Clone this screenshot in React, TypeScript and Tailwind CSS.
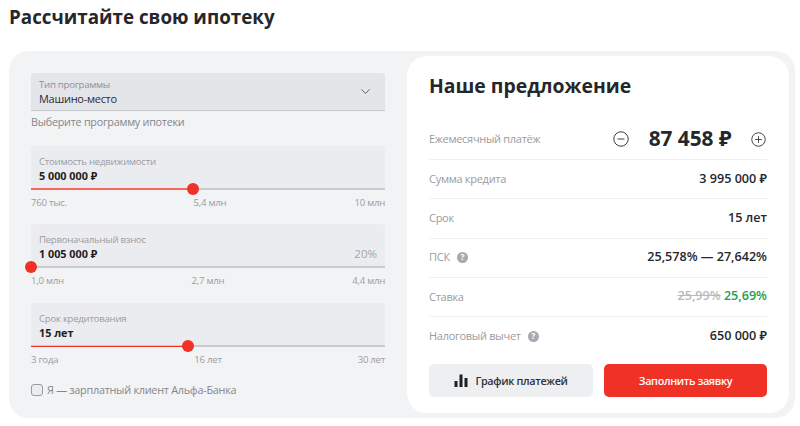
import React from 'react'
import { ChevronDown } from 'lucide-react'

const FONT = "font-['Open_Sans','Noto_Sans',sans-serif]"

function Slider({ label, value, extra, thumb, fillClass, midClass, ticks }: {
  label: string
  value: string
  extra?: string
  thumb: number
  fillClass?: string
  midClass?: string
  ticks: [string, string, string]
}) {
  return (
    <div>
      <div className="relative h-[44px] rounded-t-[3px] bg-[#ebecef] px-2 pt-[9px]">
        <div className="text-[9.6px] leading-[13px] tracking-[-0.25px] text-[#9b9ca3]">{label}</div>
        <div className="flex items-center justify-between text-[10.8px] font-bold leading-[15px] text-[#1f2024]">
          <span>{value}</span>
          {extra && <span className="text-[11.5px] font-normal text-[#a3a4aa]">{extra}</span>}
        </div>
        <div className="absolute inset-x-0 bottom-0 h-[2px] bg-[#c9cad0]" />
        {fillClass && <div className={`absolute bottom-0 left-0 ${fillClass}`} style={{ width: thumb }} />}
        <div className="absolute bottom-[-5px] h-[12px] w-[12px] -translate-x-1/2 rounded-full bg-[#f03226]" style={{ left: thumb }} />
      </div>
      <div className="mt-[6px] grid grid-cols-3 text-[9.6px] leading-[13px] tracking-[-0.25px] text-[#9b9ca3]">
        <span>{ticks[0]}</span>
        <span className={`text-center ${midClass ?? ''}`}>{ticks[1]}</span>
        <span className="text-right">{ticks[2]}</span>
      </div>
    </div>
  )
}

function Row({ label, hint, children }: { label: string; hint?: boolean; children: React.ReactNode }) {
  return (
    <div className="flex h-[39.25px] items-center justify-between border-b border-[#eeeff1] last:border-b-0">
      <div className="flex items-center gap-[7px] text-[11px] tracking-[-0.28px] text-[#9a9ba1]">
        {label}
        {hint && (
          <span className="flex h-[11px] w-[11px] items-center justify-center rounded-full bg-[#a9aab0] text-[8.5px] font-bold leading-none text-white">?</span>
        )}
      </div>
      <div className="text-[12.6px] font-semibold text-[#26272b]">{children}</div>
    </div>
  )
}

function RoundIcon({ plus, size }: { plus?: boolean; size: number }) {
  return (
    <svg width={size} height={size} viewBox="0 0 16 16" fill="none" stroke="#3a3b40" strokeWidth="1">
      <circle cx="8" cy="8" r="7.2" />
      <path d="M4.5 8h7" />
      {plus && <path d="M8 4.5v7" />}
    </svg>
  )
}

export default function App() {
  return (
    <div className={`h-[426px] w-[800px] overflow-hidden bg-white ${FONT}`}>
      <h1 className="pl-[9px] pt-[4px] text-[18.8px] font-bold leading-[27px] text-[#26272b]">Рассчитайте свою ипотеку</h1>

      <div className="ml-[9px] mt-[20px] flex h-[367px] w-[786px] gap-[22px] rounded-[20px] bg-[#f2f3f5] py-[5px] pl-[22px] pr-[6px]">
        <div className="w-[354px] pt-[17px]">
          <div className="relative h-[38px] rounded-t-[3px] border-b border-[#c6c7cd] bg-[#e4e5e9] px-2 pt-[5px]">
            <div className="text-[9.6px] leading-[13px] tracking-[-0.25px] text-[#8f9096]">Тип программы</div>
            <div className="text-[11px] leading-[15px] tracking-[-0.28px] text-[#2a2b2f]">Машино-место</div>
            <ChevronDown className="absolute right-[12px] top-[11px] text-[#55565c]" size={15} strokeWidth={1.5} />
          </div>
          <div className="mt-[3px] text-[10.8px] leading-[15px] tracking-[-0.25px] text-[#85868c]">Выберите программу ипотеки</div>

          <div className="mt-[17px]">
            <Slider label="Стоимость недвижимости" value="5 000 000 ₽" thumb={162} fillClass="h-[2px] bg-[#f4685e]" midClass="pl-[4px]" ticks={['760 тыс.', '5,4 млн', '10 млн']} />
          </div>
          <div className="mt-[15px]">
            <Slider label="Первоначальный взнос" value="1 005 000 ₽" extra="20%" thumb={0} ticks={['1,0 млн', '2,7 млн', '4,4 млн']} />
          </div>
          <div className="mt-[16px]">
            <Slider label="Срок кредитования" value="15 лет" thumb={157} fillClass="h-[1px] bg-[#f03226]" ticks={['3 года', '16 лет', '30 лет']} />
          </div>

          <label className="mt-[18px] flex items-center gap-[4px] text-[10.9px] leading-[12px] tracking-[-0.28px] text-[#85868c]">
            <span className="h-[12px] w-[12px] rounded-[3px] border border-[#9b9ca3] bg-[#ebecef]" />
            Я — зарплатный клиент Альфа-Банка
          </label>
        </div>

        <div className="h-[357px] w-[382px] rounded-[20px] bg-white px-[22px] pt-[15px]">
          <h2 className="text-[19.4px] font-bold leading-[30px] text-[#26272b]">Наше предложение</h2>

          <div className="mt-[10px]">
            <div className="flex h-[49px] items-center justify-between border-b border-[#eeeff1] pt-[8px]">
              <div className="text-[11px] tracking-[-0.3px] text-[#9a9ba1]">Ежемесячный платёж</div>
              <div className="mr-px flex items-center">
                <RoundIcon size={16} />
                <span className="w-[122px] text-center text-[20.8px] font-bold text-[#26272b]">87 458 ₽</span>
                <RoundIcon plus size={15} />
              </div>
            </div>
            <Row label="Сумма кредита">3 995 000 ₽</Row>
            <Row label="Срок">15 лет</Row>
            <Row label="ПСК" hint>25,578% — 27,642%</Row>
            <Row label="Ставка">
              <span className="text-[#b9bac0] line-through">25,99%</span>{' '}
              <span className="text-[#1d9e4f]">25,69%</span>
            </Row>
            <Row label="Налоговый вычет" hint>650 000 ₽</Row>
          </div>

          <div className="mt-[8px] flex gap-[11px]">
            <button className="flex h-[33px] w-[164px] items-center justify-center gap-[7px] rounded-[5px] bg-[#eeeff1] text-[10.8px] font-semibold tracking-[-0.33px] text-[#2f3035]">
              <svg width="14" height="13" viewBox="0 0 14 13" fill="#1f2024">
                <rect x="0.5" y="7" width="3" height="6" />
                <rect x="5.5" y="0.5" width="3" height="12.5" />
                <rect x="10.5" y="4" width="3" height="9" />
              </svg>
              График платежей
            </button>
            <button className="h-[33px] w-[163px] rounded-[5px] bg-[#f03226] text-[10.8px] font-semibold tracking-[-0.33px] text-white">Заполнить заявку</button>
          </div>
        </div>
      </div>
    </div>
  )
}
